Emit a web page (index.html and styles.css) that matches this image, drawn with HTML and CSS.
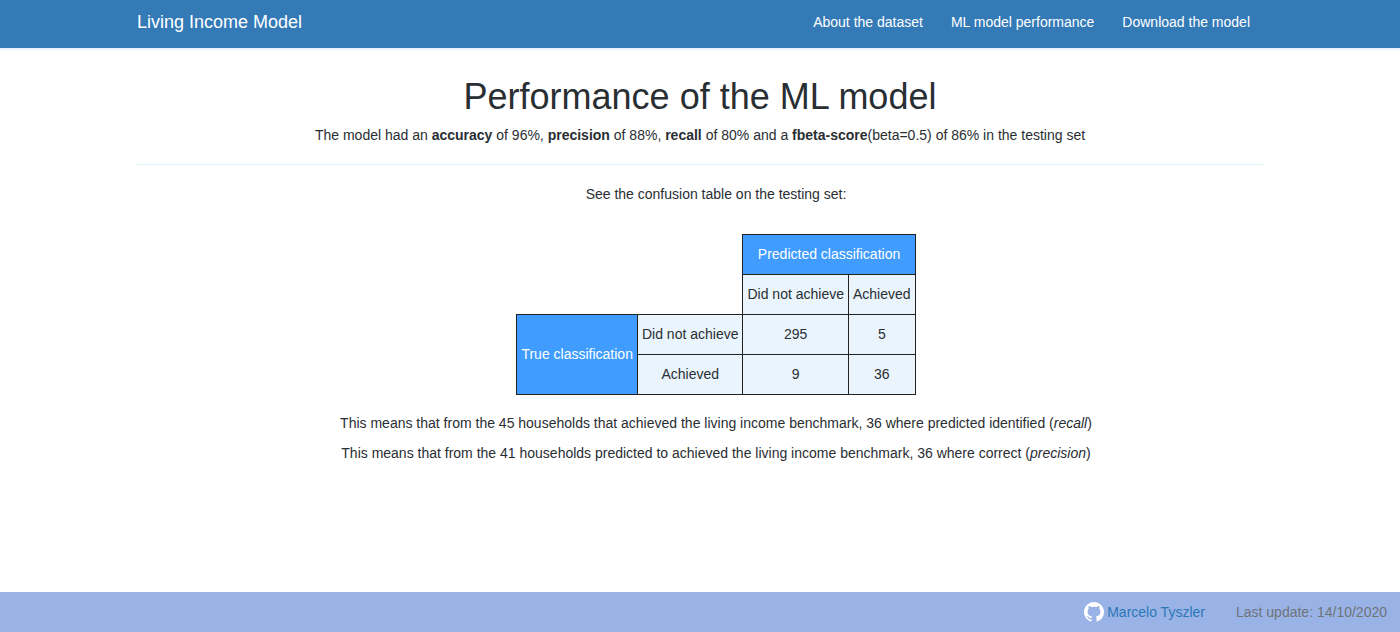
FILE: index.html
```html
<!DOCTYPE html>
<html lang="en">
<head>
<meta charset="utf-8">
<meta name="viewport" content="width=device-width, initial-scale=1">
<title>Living Income Model</title>
<link rel="stylesheet" href="styles.css">
</head>
<body>
<header class="navbar">
  <div class="container navbar-inner">
    <a class="brand" href="#">Living Income Model</a>
    <nav class="nav">
      <a href="#">About the dataset</a>
      <a href="#">ML model performance</a>
      <a href="#">Download the model</a>
    </nav>
  </div>
</header>
<main class="container">
  <section class="intro">
    <h1>Performance of the ML model</h1>
    <p>The model had an <strong>accuracy</strong> of 96%, <strong>precision</strong> of 88%, <strong>recall</strong> of 80% and a <strong>fbeta-score</strong>(beta=0.5) of 86% in the testing set</p>
  </section>
  <section class="results">
    <p>See the confusion table on the testing set:</p>
    <table class="confusion">
      <tr><td class="blank" colspan="2" rowspan="2"></td><th class="head" colspan="2" scope="colgroup">Predicted classification</th></tr>
      <tr><td>Did not achieve</td><td>Achieved</td></tr>
      <tr><th class="head" rowspan="2" scope="rowgroup">True classification</th><td>Did not achieve</td><td>295</td><td>5</td></tr>
      <tr><td>Achieved</td><td>9</td><td>36</td></tr>
    </table>
    <p>This means that from the 45 households that achieved the living income benchmark, 36 where predicted identified (<em>recall</em>)</p>
    <p>This means that from the 41 households predicted to achieved the living income benchmark, 36 where correct (<em>precision</em>)</p>
  </section>
</main>
<footer class="footer">
  <a class="author" href="#">
    <svg class="github" viewBox="0 0 16 16" aria-hidden="true"><path d="M8 0C3.58 0 0 3.58 0 8c0 3.54 2.29 6.53 5.47 7.59.4.07.55-.17.55-.38 0-.19-.01-.82-.01-1.49-2.01.37-2.53-.49-2.69-.94-.09-.23-.48-.94-.82-1.13-.28-.15-.68-.52-.01-.53.63-.01 1.08.58 1.23.82.72 1.21 1.87.87 2.33.66.07-.52.28-.87.51-1.07-1.78-.2-3.64-.89-3.64-3.95 0-.87.31-1.59.82-2.15-.08-.2-.36-1.02.08-2.12 0 0 .67-.21 2.2.82.64-.18 1.32-.27 2-.27s1.36.09 2 .27c1.53-1.04 2.2-.82 2.2-.82.44 1.1.16 1.92.08 2.12.51.56.82 1.27.82 2.15 0 3.07-1.87 3.75-3.65 3.95.29.25.54.73.54 1.48 0 1.07-.01 1.93-.01 2.2 0 .21.15.46.55.38A8.01 8.01 0 0 0 16 8c0-4.42-3.58-8-8-8z"/></svg>
    <span>Marcelo Tyszler</span>
  </a>
  <span>Last update: 14/10/2020</span>
</footer>
</body>
</html>
```

FILE: styles.css
```css
* { box-sizing: border-box; }
body {
  display: flex;
  flex-direction: column;
  min-height: 100vh;
  margin: 0;
  background: #fff;
  color: #292e33;
  font: 14px/20px "Liberation Sans", Arial, sans-serif;
}
.container { width: 100%; max-width: 1126px; margin: 0 auto; }
.navbar { background: #337ab7; border-bottom: 2px solid #ebf2fb; }
.navbar-inner {
  display: flex;
  align-items: center;
  justify-content: space-between;
  height: 48px;
  padding: 0 13px 4px 0;
}
.navbar a { color: #fff; text-decoration: none; }
.brand { font-size: 18px; }
.nav { display: flex; gap: 28px; }
.intro {
  padding: 27px 0 19px;
  border-bottom: 1px solid #e3f3fb;
  text-align: center;
}
h1 { margin: 0 0 8px; font-size: 36px; font-weight: 400; line-height: 40px; }
p { margin: 0 0 10px; }
.intro p { margin: 0; }
.results { padding: 19px 0 20px 32px; text-align: center; }
.confusion { margin: 30px auto 18px; border-collapse: collapse; }
.confusion td, .confusion th {
  padding: 9px 4px 10px;
  border: 1px solid #222;
  background: #e9f4fc;
  font-weight: 400;
  text-align: center;
}
.confusion .head { background: #409cff; color: #fff; }
.confusion .blank { border-top: 0; border-left: 0; background: none; }
.footer {
  display: flex;
  align-items: center;
  justify-content: flex-end;
  gap: 31px;
  height: 40px;
  margin-top: auto;
  padding: 0 13px;
  background: #99b3e6;
  color: #6f7478;
}
.author { display: flex; align-items: center; gap: 3px; color: #2b78b8; text-decoration: none; }
.github { width: 20px; height: 20px; fill: #fff; }
```
